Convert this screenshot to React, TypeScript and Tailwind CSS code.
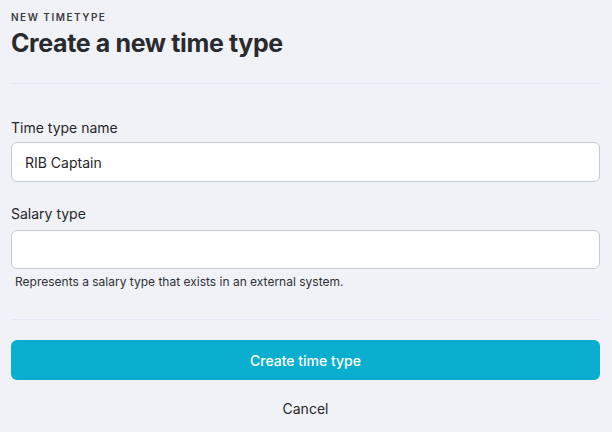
export default function App() {
  return (
    <div className="min-h-[432px] w-full bg-[#f1f2f7] pl-[11px] pr-[12px] pt-[11px] font-['Inter',sans-serif] text-[#26272b]">
      {/* Header */}
      <div className="text-[10px] font-semibold leading-[12px] tracking-[0.15em] text-[#3a3c42]">NEW TIMETYPE</div>
      <h1 className="mt-[5px] text-[25px] font-bold leading-[30px] tracking-[-0.015em] text-[#2a2b2f]">
        Create a new time type
      </h1>
      <div className="mt-[25px] h-px bg-[#e3e6ee]" />

      {/* Form */}
      <form className="pt-[34px]" onSubmit={(e) => e.preventDefault()}>
        <label className="block text-[14px] leading-[20px] text-[#26272b]">Time type name</label>
        <input
          type="text"
          defaultValue="RIB Captain"
          className="mt-[4px] block h-[40px] w-full rounded-[6px] border border-[#c4cbd3] bg-white px-[13px] text-[14px] text-[#26272b] outline-none"
        />

        <label className="mt-[22px] block text-[14px] leading-[20px] text-[#26272b]">Salary type</label>
        <input
          type="text"
          className="mt-[6px] block h-[39px] w-full rounded-[6px] border border-[#c4cbd3] bg-white px-[13px] text-[14px] outline-none"
        />
        <p className="mt-[5px] pl-[4px] text-[12px] leading-[16px] text-[#2f3136]">
          Represents a salary type that exists in an external system.
        </p>

        <div className="mt-[29px] h-px bg-[#e2e8f3]" />

        <button
          type="submit"
          className="mt-[20px] block h-[40px] w-full rounded-[6px] bg-[#0aafcf] text-[14px] font-medium text-white"
        >
          Create time type
        </button>
        <button type="button" className="mt-[19px] block w-full text-center text-[14px] leading-[20px] text-[#26272b]">
          Cancel
        </button>
      </form>
    </div>
  );
}
